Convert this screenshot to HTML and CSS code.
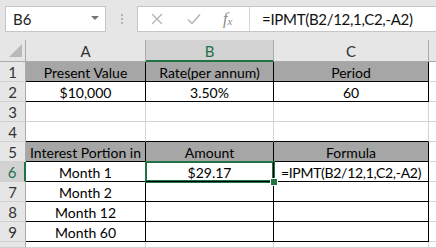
FILE: index.html
```html
<!DOCTYPE html>
<html lang="en">
<head>
  <meta charset="UTF-8">
  <title>IPMT - Sheet</title>
  <link rel="stylesheet" href="styles.css">
</head>
<body>

  <div class="toolbar">
    <div class="namebox">
      <span>B6</span>
      <span class="drop"></span>
    </div>
    <div class="dots"><i></i><i></i><i></i></div>
    <div class="fbar">
      <div class="fbtns">
        <svg class="ico" width="12" height="12" viewBox="0 0 12 12"><path d="M1 1L11 11M11 1L1 11" stroke="#b3b3b3" stroke-width="1.3" fill="none"/></svg>
        <svg class="ico check" width="14" height="12" viewBox="0 0 14 12"><path d="M1 6.5L5 10.5L13 1.5" stroke="#b3b3b3" stroke-width="1.5" fill="none"/></svg>
        <span class="fx">f<sub>x</sub></span>
      </div>
      <div class="finput formula">=IPMT(B2/12,1,C2,-A2)</div>
    </div>
  </div>

  <div class="sheet">
    <div class="corner"><span class="tri"></span></div>
    <div class="colh">A</div>
    <div class="colh sel">B</div>
    <div class="colh">C</div>
    <div class="colh rest"></div>

    <div class="rowh">1</div>
    <div class="cell fill bd">Present Value</div>
    <div class="cell fill bd">Rate(per annum)</div>
    <div class="cell fill bd">Period</div>
    <div class="cell rest"></div>

    <div class="rowh">2</div>
    <div class="cell bd">$10,000</div>
    <div class="cell bd">3.50%</div>
    <div class="cell bd">60</div>
    <div class="cell rest"></div>

    <div class="rowh">3</div>
    <div class="cell"></div>
    <div class="cell"></div>
    <div class="cell"></div>
    <div class="cell rest"></div>

    <div class="rowh">4</div>
    <div class="cell bb"></div>
    <div class="cell bb"></div>
    <div class="cell bb"></div>
    <div class="cell rest"></div>

    <div class="rowh">5</div>
    <div class="cell fill bd">Interest Portion in</div>
    <div class="cell fill bd">Amount</div>
    <div class="cell fill bd">Formula</div>
    <div class="cell rest"></div>

    <div class="rowh sel">6</div>
    <div class="cell bd">Month 1</div>
    <div class="cell bd active">$29.17<span class="handle"></span></div>
    <div class="cell bd formula">=IPMT(B2/12,1,C2,-A2)</div>
    <div class="cell rest"></div>

    <div class="rowh">7</div>
    <div class="cell bd">Month 2</div>
    <div class="cell bd"></div>
    <div class="cell bd"></div>
    <div class="cell rest"></div>

    <div class="rowh">8</div>
    <div class="cell bd">Month 12</div>
    <div class="cell bd"></div>
    <div class="cell bd"></div>
    <div class="cell rest"></div>

    <div class="rowh">9</div>
    <div class="cell bd">Month 60</div>
    <div class="cell bd"></div>
    <div class="cell bd"></div>
    <div class="cell rest"></div>

    <div class="rowh"></div>
    <div class="cell"></div>
    <div class="cell"></div>
    <div class="cell"></div>
    <div class="cell rest"></div>
  </div>

</body>
</html>
```

FILE: styles.css
```css
body {
  margin: 0;
  background: #e6e6e6;
  font-family: 'Lato', 'Liberation Sans', sans-serif;
  font-size: 14px;
  color: #000;
  width: 436px;
  height: 248px;
  overflow: hidden;
}

.toolbar {
  height: 40px;
  display: flex;
  align-items: flex-start;
  padding-top: 6px;
  box-sizing: border-box;
  background: #e6e6e6;
}

.namebox {
  margin-left: 5px;
  width: 101px;
  height: 26px;
  box-sizing: border-box;
  background: #fff;
  border: 1px solid #c6c6c6;
  display: flex;
  align-items: center;
  justify-content: space-between;
  padding: 0 6px 0 7px;
  color: #222;
  font-size: 15px;
}

.drop {
  width: 0;
  height: 0;
  border-left: 4px solid transparent;
  border-right: 4px solid transparent;
  border-top: 4px solid #777;
  margin-top: -2px;
}

.dots {
  width: 31px;
  height: 26px;
  display: flex;
  flex-direction: column;
  align-items: center;
  justify-content: center;
  gap: 2px;
}

.dots i {
  width: 2px;
  height: 2px;
  background: #b3b3b3;
}

.fbar {
  flex: 1;
  height: 26px;
  box-sizing: border-box;
  background: #fff;
  border: 1px solid #c6c6c6;
  border-right: none;
  display: flex;
}

.fbtns {
  width: 112px;
  display: flex;
  align-items: center;
  border-right: 1px solid #d4d4d4;
  padding-left: 13px;
  box-sizing: border-box;
}

.check { margin-left: 24px; }

.fx {
  margin-left: 22px;
  font-family: 'Liberation Serif', serif;
  font-style: italic;
  color: #8a8a8a;
  font-size: 16px;
}

.fx sub { font-size: 11px; vertical-align: -1px; }

.finput {
  padding-left: 12px;
  line-height: 25px;
  color: #111;
  font-size: 15px;
}

.formula { letter-spacing: -0.3px; }

.sheet {
  display: grid;
  grid-template-columns: 26px 120px 128px 155px 1fr;
  grid-template-rows: 22px repeat(9, 20px) 6px;
}

.corner {
  background: #e6e6e6;
  border-right: 1px solid #ababab;
  border-bottom: 1px solid #ababab;
  position: relative;
}

.tri {
  position: absolute;
  right: 3px;
  bottom: 4px;
  width: 0;
  height: 0;
  border-left: 13px solid transparent;
  border-bottom: 13px solid #b9b9b9;
}

.colh {
  background: #e6e6e6;
  border-right: 1px solid #ababab;
  border-bottom: 1px solid #ababab;
  text-align: center;
  line-height: 23px;
  color: #333;
  font-size: 15px;
}

.colh.sel {
  background: #d2d2d2;
  border-bottom: 2px solid #217346;
  color: #217346;
  line-height: 22px;
}

.colh.rest { border-right: none; }

.rowh {
  background: #e6e6e6;
  border-right: 1px solid #ababab;
  border-bottom: 1px solid #d0d0d0;
  text-align: center;
  line-height: 21px;
  color: #333;
  font-size: 15px;
}

.rowh.sel {
  background: #d2d2d2;
  border-right: 2px solid #217346;
  color: #217346;
}

.cell {
  background: #fff;
  border-right: 1px solid #d4d4d4;
  border-bottom: 1px solid #d4d4d4;
  text-align: center;
  line-height: 21px;
  white-space: nowrap;
  position: relative;
}

.cell.rest { border-right: none; }

.cell.fill { background: #a6a6a6; }

.cell.bd {
  border-right-color: #000;
  border-bottom-color: #000;
}

.cell.bb { border-bottom-color: #000; }

.cell.active {
  box-shadow: 0 0 0 1px #217346, inset 0 0 0 1px #217346;
  z-index: 1;
}

.handle {
  position: absolute;
  right: -5px;
  bottom: -5px;
  width: 6px;
  height: 6px;
  background: #217346;
  border: 1px solid #fff;
}
```
